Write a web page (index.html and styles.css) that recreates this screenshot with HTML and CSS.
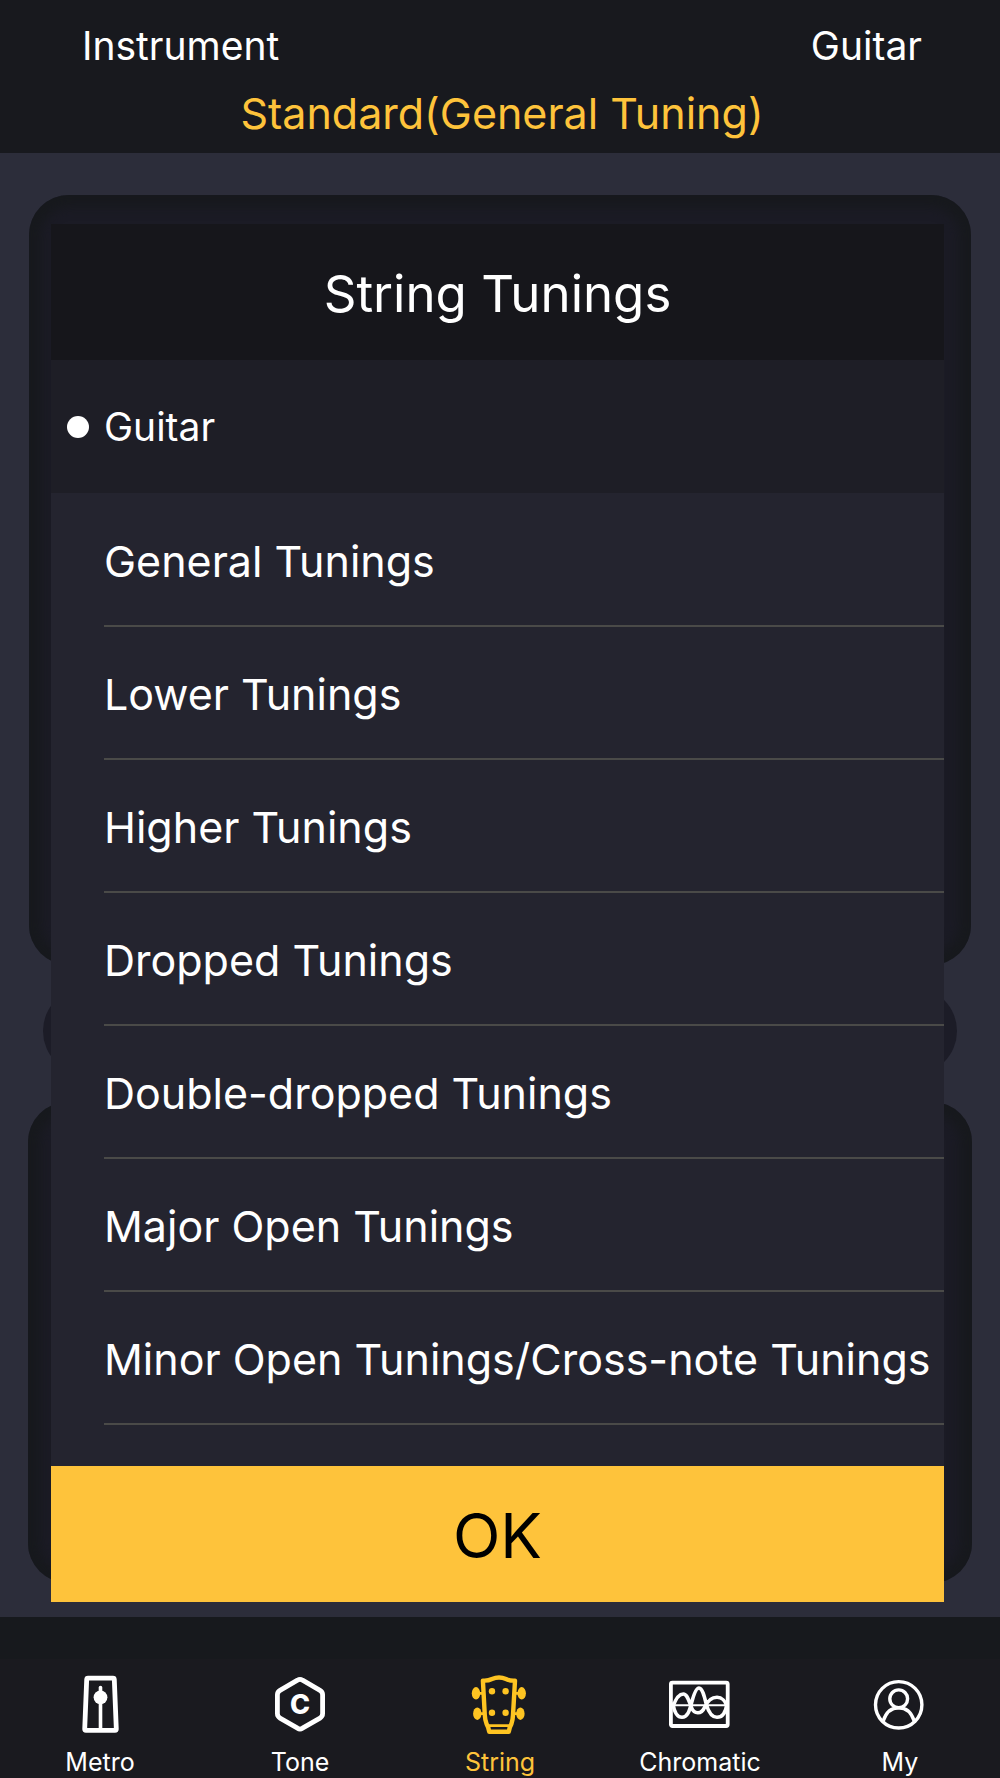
FILE: index.html
```html
<!DOCTYPE html>
<html lang="en">
<head>
<meta charset="utf-8">
<meta name="viewport" content="width=device-width, initial-scale=1">
<title>String Tunings</title>
<link rel="stylesheet" href="styles.css">
</head>
<body>
<header class="topbar">
  <div class="topbar-row">
    <span>Instrument</span>
    <button type="button" class="plain">Guitar</button>
  </div>
  <div class="tuning-name">Standard(General Tuning)</div>
</header>

<main class="stage">
  <div class="backdrop" aria-hidden="true">
    <div class="panel panel-tall"></div>
    <div class="pill"></div>
    <div class="panel panel-short"></div>
  </div>

  <section class="dialog" role="dialog" aria-labelledby="dialog-title">
    <h1 class="dialog-title" id="dialog-title">String Tunings</h1>
    <h2 class="group"><span class="dot"></span>Guitar</h2>
    <ul class="tunings">
      <li><button type="button" class="plain">General Tunings</button></li>
      <li><button type="button" class="plain">Lower Tunings</button></li>
      <li><button type="button" class="plain">Higher Tunings</button></li>
      <li><button type="button" class="plain">Dropped Tunings</button></li>
      <li><button type="button" class="plain">Double-dropped Tunings</button></li>
      <li><button type="button" class="plain">Major Open Tunings</button></li>
      <li><button type="button" class="plain">Minor Open Tunings/Cross-note Tunings</button></li>
    </ul>
    <button type="button" class="ok">OK</button>
  </section>
</main>

<nav class="tabs">
  <a href="#metro" class="tab">
    <svg class="icon" viewBox="0 0 64 64" aria-hidden="true">
      <path d="M20 6.200H45Q46.200 6.200 46.300 7.400L48.300 57Q48.300 58.300 47 58.300H18Q16.700 58.300 16.700 57L18.700 7.400Q18.800 6.200 20 6.200Z" stroke-width="4.800"/>
      <path d="M32.500 15.500V58" stroke-width="3.600"/>
      <circle class="solid" cx="32.500" cy="25.300" r="6.900"/>
    </svg>
    <span>Metro</span>
  </a>
  <a href="#tone" class="tab">
    <svg class="icon" viewBox="0 0 64 64" aria-hidden="true">
      <path d="M29.500 8.200Q32 6.600 34.500 8.200L52 18.300Q54.600 19.800 54.600 22.800V41.600Q54.600 44.600 52 46.100L34.500 56.200Q32 57.800 29.500 56.200L12 46.100Q9.400 44.600 9.400 41.600V22.800Q9.400 19.800 12 18.300Z" stroke-width="4.800"/>
      <text class="note" x="32" y="42" text-anchor="middle">C</text>
    </svg>
    <span>Tone</span>
  </a>
  <a href="#string" class="tab tab-active" aria-current="page">
    <svg class="icon" viewBox="0 0 64 64" aria-hidden="true">
      <path d="M14.900 8.600Q20 9 24 7Q31 3.900 38 7Q42 9 47 8.600L45 43Q44.800 48 43.400 52Q41.500 55 40.800 59.800H21.200Q20.500 55 18.600 52Q17 48 16.800 43Z" stroke-width="4.400"/>
      <path d="M19 53.600H43" stroke-width="2.600"/>
      <path d="M9 21.300H15M47 21.300H53M10 41.700H16M46 41.700H52" stroke-width="2.800"/>
      <g class="solid">
        <ellipse cx="8" cy="21.300" rx="4.200" ry="6.200"/>
        <ellipse cx="53.700" cy="21.300" rx="4.200" ry="6.200"/>
        <ellipse cx="9.300" cy="41.700" rx="4.200" ry="6.200"/>
        <ellipse cx="52.400" cy="41.700" rx="4.200" ry="6.200"/>
        <circle cx="24" cy="19.200" r="3.200"/>
        <circle cx="37.600" cy="19.200" r="3.200"/>
        <circle cx="24" cy="40.700" r="3.200"/>
        <circle cx="37.600" cy="40.700" r="3.200"/>
      </g>
    </svg>
    <span>String</span>
  </a>
  <a href="#chromatic" class="tab">
    <svg class="icon" viewBox="0 0 64 64" aria-hidden="true">
      <rect x="2.900" y="10.600" width="56.800" height="43.400" rx="1.500" stroke-width="3.800"/>
      <path d="M4 33.300H59" stroke-width="2"/>
      <path d="M5 34.500C8 26 11.500 22 15.300 22C19.500 22 21 30 23.500 35.500C26 42.500 33.500 42.500 36.500 35.500C39.500 29 43.500 25.300 49 25.300C54 25.300 57.500 29.500 58.700 34M5 32C6.500 41 9.500 45.300 14 45.300C19.500 45.300 21.500 39 23.500 31C26 21.500 28.500 16 31 16C34.500 16 36.500 25 38.500 33C41 41.500 44.500 45.300 49 45.300C54 45.300 57.500 41 58.700 33" stroke-width="3.600"/>
    </svg>
    <span>Chromatic</span>
  </a>
  <a href="#my" class="tab">
    <svg class="icon" viewBox="0 0 64 64" aria-hidden="true">
      <circle cx="30.700" cy="32.800" r="23.200" stroke-width="3.400"/>
      <circle cx="30.700" cy="26.800" r="8.900" stroke-width="3.400"/>
      <path d="M15.200 49Q19.500 35.700 30.700 35.700Q41.900 35.700 46.200 49" stroke-width="3.400"/>
    </svg>
    <span>My</span>
  </a>
</nav>
</body>
</html>
```
FILE: styles.css
```css
* {
  box-sizing: border-box;
}

body {
  margin: 0;
  min-height: 100vh;
  display: flex;
  flex-direction: column;
  background: #2c2d3a;
  color: #fff;
  font-family: Inter, "Liberation Sans", sans-serif;
}

.plain {
  padding: 0;
  border: 0;
  background: none;
  color: inherit;
  font: inherit;
  text-align: left;
  cursor: pointer;
}

.topbar {
  padding: 16px 0 8px;
  background: #18191e;
}

.topbar-row {
  display: flex;
  justify-content: space-between;
  padding: 0 78px 0 82px;
  font-size: 39px;
  line-height: 60px;
}

.tuning-name {
  padding: 5px 0 0 4px;
  color: #fec33b;
  font-size: 43px;
  line-height: 64px;
  text-align: center;
}

.stage {
  flex: 1;
  display: grid;
}

.backdrop,
.dialog {
  grid-area: 1 / 1;
  display: flex;
  flex-direction: column;
}

.backdrop {
  padding: 42px 28px 34px;
}

.panel {
  border-radius: 40px;
  background: #1b1b25;
  box-shadow: inset 0 0 12px 12px #17191d;
}

.panel-tall {
  flex: 8;
  margin: 0 1px;
}

.panel-short {
  flex: 5;
}

.pill {
  height: 88px;
  margin: 22px 15px 27px;
  border-radius: 44px;
  background: #1c1c27;
}

.dialog {
  margin: 71px 56px 15px 51px;
  background: #24242f;
}

.dialog-title {
  margin: 0;
  padding: 4px 0 0;
  background: #16161b;
  font-size: 51px;
  font-weight: 400;
  line-height: 132px;
  text-align: center;
}

.group {
  display: flex;
  align-items: center;
  gap: 15px;
  height: 133px;
  margin: 0;
  padding-left: 16px;
  background: #1e1e26;
  font-size: 39px;
  font-weight: 400;
}

.dot {
  width: 22px;
  height: 22px;
  border-radius: 50%;
  background: #fff;
}

.tunings {
  flex: 1;
  margin: 0;
  padding: 1px 0 0 53px;
  list-style: none;
  font-size: 43px;
}

.tunings li {
  height: 133px;
  border-bottom: 2px solid #4a4a48;
}

.tunings .plain {
  width: 100%;
  height: 100%;
  padding: 2px 0 0;
  white-space: nowrap;
}

.ok {
  height: 136px;
  padding: 3px 0 0;
  border: 0;
  background: #fec33b;
  color: #000;
  font: inherit;
  font-size: 62px;
  cursor: pointer;
}

.tabs {
  display: flex;
  padding: 55px 0 0;
  background: linear-gradient(#17191d 42px, #1a1a1f 42px);
}

.tab {
  flex: 1;
  display: flex;
  flex-direction: column;
  align-items: center;
  gap: 11px;
  padding-bottom: 1px;
  color: #fff;
  font-size: 25px;
  line-height: 30px;
  text-decoration: none;
}

.tab-active {
  color: #fec33b;
}

.icon {
  width: 64px;
  height: 64px;
  fill: none;
  stroke: currentColor;
  stroke-linecap: round;
  stroke-linejoin: round;
}

.tab-active .icon {
  color: #fec422;
}

.solid,
.note {
  fill: currentColor;
  stroke: none;
}

.note {
  font-size: 27px;
  font-weight: 800;
}
```
